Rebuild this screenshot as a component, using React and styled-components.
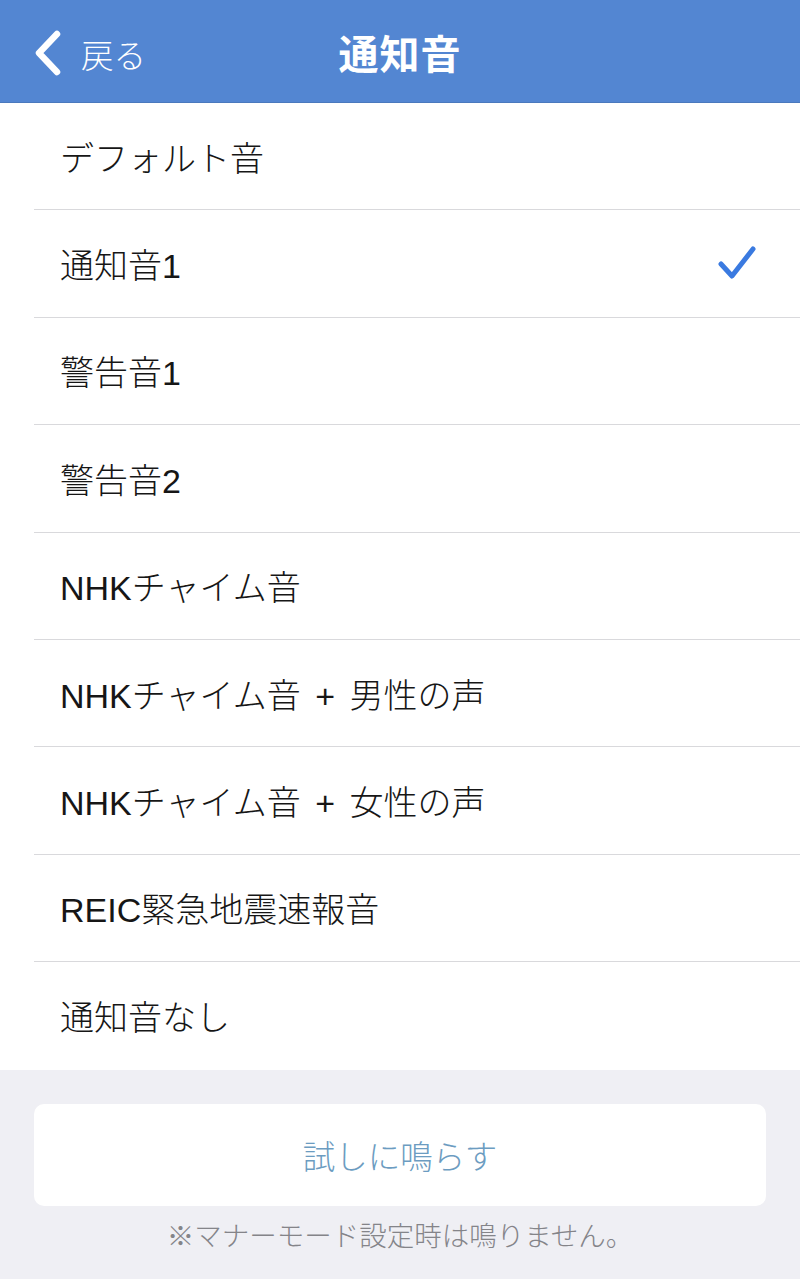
import React from "react";
import styled, { createGlobalStyle } from "styled-components";

const Global = createGlobalStyle`
  html, body { margin: 0; padding: 0; background: #efeff4; }
  body { font-family: "Liberation Sans", "Noto Sans CJK JP", sans-serif; -webkit-font-smoothing: antialiased; }
  * { box-sizing: border-box; }
`;

const Page = styled.div`
  width: 800px;
  height: 1279px;
  background: #efeff4;
  display: flex;
  flex-direction: column;
  overflow: hidden;
`;

const NavBar = styled.header`
  height: 103px;
  background: #5386d2;
  border-bottom: 1px solid #4a79bd;
  display: grid;
  grid-template-columns: 1fr auto 1fr;
  align-items: center;
  color: #fff;
`;

const BackButton = styled.div`
  display: flex;
  align-items: center;
  gap: 18px;
  padding-left: 33px;
  font-size: 32.5px;
  font-weight: 300;
  padding-top: 4px;
`;

const Title = styled.h1`
  margin: 0;
  font-size: 40px;
  font-weight: 700;
  letter-spacing: 1px;
  padding-top: 2px;
`;

const List = styled.ul`
  list-style: none;
  margin: 0;
  padding: 0 0 0 34px;
  background: #fff;
`;

const Row = styled.li`
  height: 107.4px;
  display: flex;
  align-items: center;
  justify-content: space-between;
  padding: 0 44px 0 26px;
  font-size: 34px;
  font-weight: 300;
  word-spacing: 5px;
  color: #161616;
  border-bottom: ${(p) => (p.$last ? "none" : "1px solid #d9d9dc")};
`;

const Footer = styled.div`
  padding: 34px 34px 0;
  display: flex;
  flex-direction: column;
  align-items: stretch;
`;

const TryButton = styled.button`
  height: 102px;
  border: none;
  border-radius: 10px;
  background: #fff;
  color: #6c9cc1;
  font-family: inherit;
  font-size: 32.5px;
  font-weight: 300;
  padding: 0;
  cursor: pointer;
`;

const Note = styled.p`
  margin: 8px 0 0;
  text-align: center;
  font-size: 27.5px;
  font-weight: 300;
  color: #848489;
`;

const items = [
  "デフォルト音",
  "通知音1",
  "警告音1",
  "警告音2",
  "NHKチャイム音",
  "NHKチャイム音 + 男性の声",
  "NHKチャイム音 + 女性の声",
  "REIC緊急地震速報音",
  "通知音なし",
];

const Chevron = () => (
  <svg width="30" height="46" viewBox="0 0 30 46">
    <path d="M24 4 L6 23 L24 42" fill="none" stroke="#fff" strokeWidth="6.5" strokeLinecap="round" strokeLinejoin="round" />
  </svg>
);

const Check = () => (
  <svg width="38" height="38" viewBox="0 0 38 38">
    <path d="M3 19 L14 31 L35 4" fill="none" stroke="#3a7ae0" strokeWidth="5" strokeLinecap="round" strokeLinejoin="round" />
  </svg>
);

export default function App() {
  return (
    <Page>
      <Global />
      <NavBar>
        <BackButton>
          <Chevron />
          <span>戻る</span>
        </BackButton>
        <Title>通知音</Title>
        <div />
      </NavBar>
      <List>
        {items.map((t, i) => (
          <Row key={t} $last={i === items.length - 1}>
            <span>{t}</span>
            {i === 1 && <Check />}
          </Row>
        ))}
      </List>
      <Footer>
        <TryButton>試しに鳴らす</TryButton>
        <Note>※マナーモード設定時は鳴りません。</Note>
      </Footer>
    </Page>
  );
}
